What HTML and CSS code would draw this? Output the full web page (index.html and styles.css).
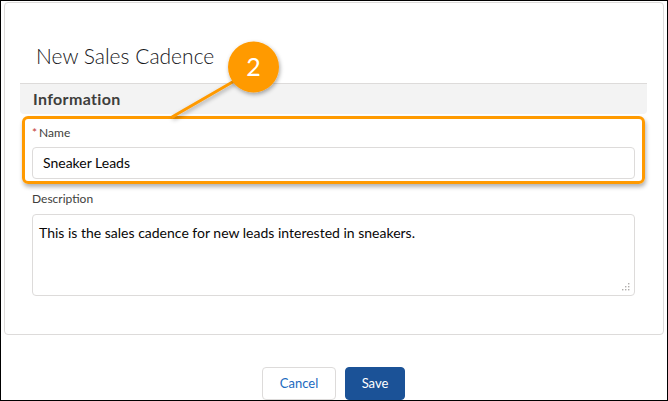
FILE: index.html
```html
<!DOCTYPE html>
<html>
<head>
<meta charset="utf-8">
<link rel="stylesheet" href="styles.css">
</head>
<body>
<div class="frame">
  <div class="card">
    <h1 class="title">New Sales Cadence</h1>
    <div class="section">Information</div>
    <div class="highlight">
      <div class="label"><span class="req">*</span>Name</div>
      <div class="input">Sneaker Leads</div>
    </div>
    <div class="field">
      <div class="label">Description</div>
      <div class="textarea">This is the sales cadence for new leads interested in sneakers.
        <svg class="grip" width="8" height="8" viewBox="0 0 8 8">
          <rect x="6" y="0" width="1.4" height="1.4" fill="#b0adab"/>
          <rect x="3" y="3" width="1.4" height="1.4" fill="#b0adab"/>
          <rect x="6" y="3" width="1.4" height="1.4" fill="#b0adab"/>
          <rect x="0" y="6" width="1.4" height="1.4" fill="#b0adab"/>
          <rect x="3" y="6" width="1.4" height="1.4" fill="#b0adab"/>
          <rect x="6" y="6" width="1.4" height="1.4" fill="#b0adab"/>
        </svg>
      </div>
    </div>
  </div>
  <div class="actions">
    <div class="btn cancel">Cancel</div>
    <div class="btn save">Save</div>
  </div>
  <svg class="callout" width="668" height="401" viewBox="0 0 668 401">
    <defs>
      <filter id="sh" x="-30%" y="-30%" width="160%" height="160%">
        <feDropShadow dx="1" dy="2" stdDeviation="2" flood-color="#000" flood-opacity="0.35"/>
      </filter>
    </defs>
    <line x1="236" y1="80" x2="172" y2="117" stroke="#ff9a00" stroke-width="3" filter="url(#sh)"/>
    <circle cx="253.5" cy="67" r="25.5" fill="#ff9a00" filter="url(#sh)"/>
    <text x="253.5" y="75.5" text-anchor="middle" class="num">2</text>
  </svg>
</div>
</body>
</html>
```

FILE: styles.css
```css
* { box-sizing: border-box; }
body {
  margin: 0;
  font-family: Lato, "Open Sans", sans-serif;
  background: #fff;
}
.frame {
  position: relative;
  width: 668px;
  height: 401px;
  border: 1px solid #000;
  overflow: hidden;
  background: #fff;
}
.card {
  margin: 1px 3px 0 3px;
  height: 333px;
  border: 1px solid #dddbda;
  border-radius: 4px;
  padding-top: 1px;
}
.title {
  margin: 38px 0 0 31px;
  font-size: 21px;
  font-weight: 300;
  line-height: 28px;
  color: #16161a;
  height: 41px;
}
.section {
  margin: 0 16px 0 15px;
  height: 31px;
  background: #f3f3f3;
  border-top: 1px solid #dddbda;
  border-radius: 0 0 4px 4px;
  padding-left: 13px;
  font-size: 16px;
  font-weight: 700;
  line-height: 30px;
  color: #3e3e3c;
  letter-spacing: 0.35px;
}
.highlight {
  margin: 2px 0 0 17px;
  width: 623px;
  height: 68px;
  border: 3px solid #ff9a00;
  border-radius: 6px;
  box-shadow: 1px 3px 4px rgba(0,0,0,0.3);
  padding: 5px 7px 0 7px;
}
.label {
  font-size: 12px;
  line-height: 18px;
  color: #3e3e3c;
  height: 23px;
}
.req {
  color: #c23934;
  margin-right: 2px;
}
.input {
  height: 32px;
  border: 1px solid #dddbda;
  border-radius: 4px;
  padding-left: 10px;
  font-size: 14px;
  line-height: 30px;
  color: #080707;
}
.field {
  margin: 6px 0 0 27px;
  width: 603px;
}
.field .label { height: 24px; }
.textarea {
  position: relative;
  height: 82px;
  border: 1px solid #dddbda;
  border-radius: 4px;
  padding: 8px 6px;
  font-size: 14px;
  line-height: 20px;
  color: #080707;
}
.grip {
  position: absolute;
  right: 4px;
  bottom: 4px;
}
.actions {
  display: flex;
  justify-content: center;
  gap: 9px;
  margin-top: 32px;
  padding-right: 1px;
}
.btn {
  height: 33px;
  border-radius: 4px;
  font-size: 13px;
  line-height: 31px;
  text-align: center;
}
.cancel {
  width: 74px;
  border: 1px solid #dddbda;
  color: #1b6ac0;
  background: #fff;
}
.save {
  width: 60px;
  border: 1px solid #1b5297;
  background: #1b5297;
  color: #fff;
}
.callout {
  position: absolute;
  left: -1px;
  top: -1px;
}
.num {
  font-family: Lato, sans-serif;
  font-size: 25px;
  fill: #fff;
}
```
